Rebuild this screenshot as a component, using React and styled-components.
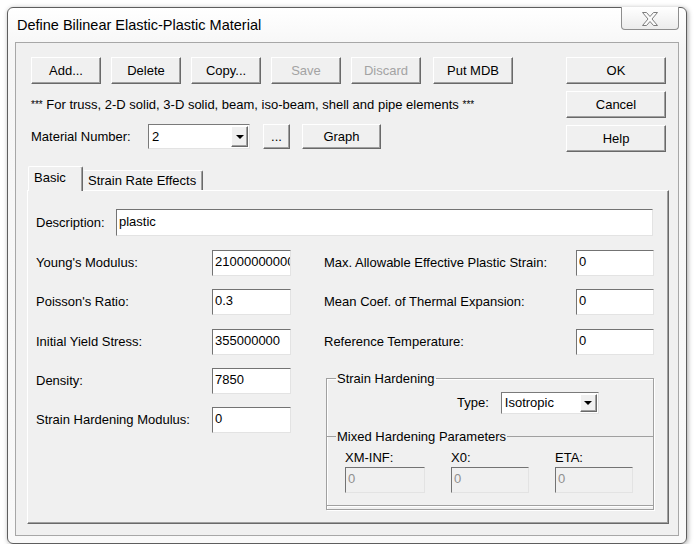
import React from 'react';
import styled, { createGlobalStyle } from 'styled-components';

const GlobalStyle = createGlobalStyle`
  html, body {
    margin: 0;
    padding: 0;
    background: #ffffff;
  }
  body {
    font-family: "Liberation Sans", Arial, sans-serif;
    font-size: 13px;
    color: #000;
  }
`;

const FONT = `"Liberation Sans", Arial, sans-serif`;

const Window = styled.div`
  box-sizing: border-box;
  margin: 7px 0 0 7px;
  width: 680px;
  height: 537px;
  border: 1px solid #5e5e5e;
  border-radius: 6px;
  background: linear-gradient(to bottom, #ffffff 0px, #f6f6f6 40px, #f9f9f9 100%);
  box-shadow: 1px 1px 5px rgba(0, 0, 0, 0.35);
  padding: 0 7px 7px 7px;
  display: flex;
  flex-direction: column;
`;

const TitleBar = styled.div`
  height: 34px;
  flex: none;
  display: flex;
  justify-content: space-between;
  align-items: flex-start;
`;

const Title = styled.div`
  margin: 7px 0 0 2px;
  font-size: 14.5px;
  line-height: 20px;
`;

const CloseButton = styled.div`
  box-sizing: border-box;
  margin-top: -1px;
  width: 58px;
  height: 23px;
  border: 1px solid #8e8e8e;
  border-top: none;
  border-radius: 0 0 4px 4px;
  background: linear-gradient(to bottom, #ffffff, #ececec);
  display: flex;
  align-items: center;
  justify-content: center;
  padding-top: 1px;
`;

const Client = styled.div`
  box-sizing: border-box;
  flex: 1;
  border: 1px solid #a7a7a7;
  background: #f0f0f0;
  padding: 14px 9px 11px 11px;
  display: flex;
  flex-direction: column;
`;

const TopSection = styled.div`
  display: flex;
  justify-content: space-between;
  align-items: flex-start;
  padding: 0 3px 0 4px;
`;

const LeftColumn = styled.div`
  display: flex;
  flex-direction: column;
`;

const ButtonRow = styled.div`
  display: flex;
  gap: 10px;
`;

const SideButtons = styled.div`
  display: flex;
  flex-direction: column;
  gap: 7px;
`;

const Button = styled.button`
  box-sizing: border-box;
  width: ${p => p.$w || 70}px;
  height: ${p => p.$h || 27}px;
  margin-left: ${p => p.$ml || 0}px;
  padding: 0;
  font-family: ${FONT};
  font-size: 13px;
  color: ${p => (p.disabled ? '#a3a3a3' : '#000')};
  background: #f0f0f0;
  border: 1px solid;
  border-color: #ffffff #696969 #696969 #ffffff;
  box-shadow: inset -1px -1px 0 #a0a0a0;
  cursor: default;
`;

const Notice = styled.div`
  margin-top: 13px;
  line-height: 16px;
  white-space: nowrap;
`;

const Stars = styled.span`
  font-size: 10px;
  vertical-align: 1px;
`;

const MaterialRow = styled.div`
  margin-top: 11px;
  display: flex;
  align-items: center;
  height: 25px;
`;

const Label = styled.div`
  width: ${p => p.$w}px;
  flex: none;
  white-space: nowrap;
  line-height: 16px;
`;

const Combo = styled.div`
  box-sizing: border-box;
  width: ${p => p.$w}px;
  height: ${p => p.$h}px;
  margin-right: ${p => p.$mr || 0}px;
  background: #fff;
  border: 1px solid;
  border-color: #7a7a7a #e3e3e3 #e3e3e3 #7a7a7a;
  padding: 1px;
  display: flex;
  align-items: stretch;
`;

const ComboText = styled.div`
  flex: 1;
  padding-left: 2px;
  display: flex;
  align-items: center;
`;

const DropButton = styled.div`
  box-sizing: border-box;
  width: 17px;
  background: #f0f0f0;
  border: 1px solid;
  border-color: #ffffff #696969 #696969 #ffffff;
  box-shadow: inset -1px -1px 0 #a0a0a0;
  display: flex;
  align-items: center;
  justify-content: center;
`;

const Arrow = styled.div`
  width: 0;
  height: 0;
  border-left: 4px solid transparent;
  border-right: 4px solid transparent;
  border-top: 4px solid #000;
`;

const TabStrip = styled.div`
  margin-top: 14px;
  height: 24px;
  display: flex;
  align-items: flex-end;
  padding-left: 1px;
`;

const Tab = styled.div`
  box-sizing: border-box;
  position: relative;
  z-index: ${p => (p.$active ? 1 : 0)};
  width: ${p => p.$w}px;
  height: ${p => (p.$active ? 25 : 20)}px;
  margin-bottom: ${p => (p.$active ? -1 : 0)}px;
  background: #f0f0f0;
  border-top: 1px solid #ffffff;
  border-left: 1px solid ${p => (p.$active ? '#ffffff' : '#f0f0f0')};
  border-right: 1px solid #696969;
  box-shadow: inset -1px 0 0 #a0a0a0;
  border-radius: 2px 2px 0 0;
  padding: ${p => (p.$active ? '3px 0 0 5px' : '2px 0 0 4px')};
  line-height: 16px;
  white-space: nowrap;
`;

const Panel = styled.div`
  box-sizing: border-box;
  flex: 1;
  border: 1px solid;
  border-color: #ffffff #696969 #696969 #ffffff;
  box-shadow: inset -1px -1px 0 #a0a0a0;
  padding: 18px 13px 0 8px;
  display: flex;
  flex-direction: column;
`;

const Row = styled.div`
  display: flex;
  align-items: center;
  height: ${p => p.$h || 26}px;
`;

const Field = styled.input`
  box-sizing: border-box;
  width: ${p => p.$w}px;
  height: ${p => p.$h || 26}px;
  flex: none;
  margin: 0;
  padding: 0 0 3px 2px;
  font-family: ${FONT};
  font-size: 13px;
  color: ${p => (p.disabled ? '#8f8f8f' : '#000')};
  background: ${p => (p.disabled ? '#f0f0f0' : '#ffffff')};
  border: 1px solid;
  border-color: #737373 #e3e3e3 #e3e3e3 #737373;
  outline: none;
`;

const Columns = styled.div`
  margin-top: 14px;
  display: flex;
  gap: 33px;
`;

const FieldColumn = styled.div`
  display: flex;
  flex-direction: column;
  gap: 13.3px;
`;

const GroupBox = styled.fieldset`
  box-sizing: border-box;
  margin: ${p => p.$m || '0'};
  padding: ${p => p.$p || '0'};
  min-width: 0;
  border: none;
  border-top: 1px solid #a0a0a0;
  border-bottom: 1px solid #a0a0a0;
  border-left: ${p => (p.$sides ? '1px solid #a0a0a0' : 'none')};
  border-right: ${p => (p.$sides ? '1px solid #a0a0a0' : 'none')};
  box-shadow: ${p => (p.$sides ? 'inset 1px 1px 0 #ffffff, 1px 1px 0 #ffffff' : '0 1px 0 #ffffff')};
`;

const Legend = styled.legend`
  margin-left: ${p => p.$ml}px;
  padding: 0 1px;
  line-height: 15px;
`;

const TypeRow = styled.div`
  margin: 6px 0 0 130px;
  display: flex;
  align-items: center;
  gap: 12px;
`;

const ParamGrid = styled.div`
  display: grid;
  grid-template-columns: 80px 78px 78px;
  column-gap: 26px;
  row-gap: 1px;
  padding: 6px 0 12px 18px;
`;

const ParamLabel = styled.div`
  line-height: 16px;
`;

const CloseGlyph = () => (
  <svg width="16" height="14" viewBox="0 0 16 14">
    <path
      d="M0.5 0.5 H4.5 L8 4.5 L11.5 0.5 H15.5 L10 7 L15.5 13.5 H11.5 L8 9.5 L4.5 13.5 H0.5 L6 7 Z"
      fill="#fbfbfb"
      stroke="#7d7d7d"
      strokeWidth="1"
      strokeLinejoin="round"
    />
  </svg>
);

const ComboBox = ({ value, w, h, mr }) => (
  <Combo $w={w} $h={h} $mr={mr}>
    <ComboText>{value}</ComboText>
    <DropButton><Arrow /></DropButton>
  </Combo>
);

const leftFields = [
  ["Young's Modulus:", '210000000000'],
  ["Poisson's Ratio:", '0.3'],
  ['Initial Yield Stress:', '355000000'],
  ['Density:', '7850'],
  ['Strain Hardening Modulus:', '0'],
];

const rightFields = [
  ['Max. Allowable Effective Plastic Strain:', '0'],
  ['Mean Coef. of Thermal Expansion:', '0'],
  ['Reference Temperature:', '0'],
];

const params = ['XM-INF:', 'X0:', 'ETA:'];

export default function App() {
  return (
    <>
      <GlobalStyle />
      <Window>
        <TitleBar>
          <Title>Define Bilinear Elastic-Plastic Material</Title>
          <CloseButton><CloseGlyph /></CloseButton>
        </TitleBar>
        <Client>
          <TopSection>
            <LeftColumn>
              <ButtonRow>
                <Button>Add...</Button>
                <Button>Delete</Button>
                <Button>Copy...</Button>
                <Button disabled>Save</Button>
                <Button disabled>Discard</Button>
                <Button $w={80} $ml={2}>Put MDB</Button>
              </ButtonRow>
              <Notice>
                <Stars>***</Stars> For truss, 2-D solid, 3-D solid, beam, iso-beam, shell and pipe elements <Stars>***</Stars>
              </Notice>
              <MaterialRow>
                <Label $w={117}>Material Number:</Label>
                <ComboBox value="2" w={102} h={25} mr={13} />
                <Button $w={27} $h={25}>...</Button>
                <Button $w={79} $h={25} $ml={12}>Graph</Button>
              </MaterialRow>
            </LeftColumn>
            <SideButtons>
              <Button $w={100}>OK</Button>
              <Button $w={100}>Cancel</Button>
              <Button $w={100}>Help</Button>
            </SideButtons>
          </TopSection>

          <TabStrip>
            <Tab $active $w={55}>Basic</Tab>
            <Tab $w={120}>Strain Rate Effects</Tab>
          </TabStrip>
          <Panel>
            <Row $h={27}>
              <Label $w={80}>Description:</Label>
              <Field $w={537} $h={27} readOnly value="plastic" />
            </Row>
            <Columns>
              <FieldColumn>
                {leftFields.map(([label, value]) => (
                  <Row key={label}>
                    <Label $w={176}>{label}</Label>
                    <Field $w={79} readOnly value={value} />
                  </Row>
                ))}
              </FieldColumn>
              <FieldColumn>
                {rightFields.map(([label, value]) => (
                  <Row key={label}>
                    <Label $w={252}>{label}</Label>
                    <Field $w={78} readOnly value={value} />
                  </Row>
                ))}
                <GroupBox $sides $m="3px 0 0 2px" $p="0">
                  <Legend $ml={9}>Strain Hardening</Legend>
                  <TypeRow>
                    <span>Type:</span>
                    <ComboBox value="Isotropic" w={98} h={22} />
                  </TypeRow>
                  <GroupBox $m="15px 0 3px 0">
                    <Legend $ml={9}>Mixed Hardening Parameters</Legend>
                    <ParamGrid>
                      {params.map(p => <ParamLabel key={p}>{p}</ParamLabel>)}
                      {params.map(p => <Field key={p} $w={p === 'XM-INF:' ? 80 : 78} disabled value="0" readOnly />)}
                    </ParamGrid>
                  </GroupBox>
                </GroupBox>
              </FieldColumn>
            </Columns>
          </Panel>
        </Client>
      </Window>
    </>
  );
}
